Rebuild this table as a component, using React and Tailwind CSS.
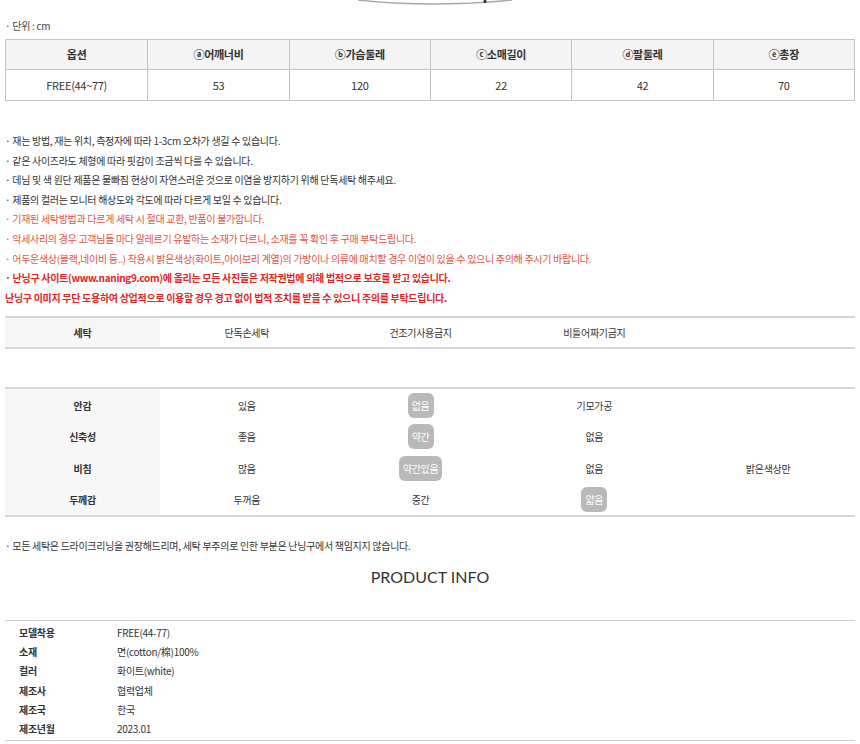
const KR = { fontFamily: '"Noto Sans CJK KR", "Noto Sans", sans-serif' };

const sizeHead = ['옵션', 'ⓐ어깨너비', 'ⓑ가슴둘레', 'ⓒ소매길이', 'ⓓ팔둘레', 'ⓔ총장'];
const sizeBody = ['FREE(44~77)', '53', '120', '22', '42', '70'];

const notes = [
  { t: '· 재는 방법, 재는 위치, 측정자에 따라 1-3cm 오차가 생길 수 있습니다.', c: 'text-[#333]' },
  { t: '· 같은 사이즈라도 체형에 따라 핏감이 조금씩 다를 수 있습니다.', c: 'text-[#333]' },
  { t: '· 데님 및 색 원단 제품은 물빠짐 현상이 자연스러운 것으로 이염을 방지하기 위해 단독세탁 해주세요.', c: 'text-[#333]' },
  { t: '· 제품의 컬러는 모니터 해상도와 각도에 따라 다르게 보일 수 있습니다.', c: 'text-[#333]' },
  { t: '· 기재된 세탁방법과 다르게 세탁 시 절대 교환, 반품이 불가합니다.', c: 'text-[#e2533f]' },
  { t: '· 악세사리의 경우 고객님들 마다 알레르기 유발하는 소재가 다르니, 소재를 꼭 확인 후 구매 부탁드립니다.', c: 'text-[#e2533f]' },
  { t: '· 어두운색상(블랙,네이비 등..) 착용시 밝은색상(화이트,아이보리 계열)의 가방이나 의류에 매치할 경우 이염이 있을 수 있으니 주의해 주시기 바랍니다.', c: 'text-[#e2533f]' },
  { t: '· 난닝구 사이트(www.naning9.com)에 올리는 모든 사진들은 저작권법에 의해 법적으로 보호를 받고 있습니다.', c: 'text-[#e0241f] font-bold' },
  { t: '난닝구 이미지 무단 도용하여 상업적으로 이용할 경우 경고 없이 법적 조치를 받을 수 있으니 주의를 부탁드립니다.', c: 'text-[#e0241f] font-bold' },
];

// which column is highlighted per row (index into values)
const fabric = [
  { label: '안감', vals: ['있음', '없음', '기모가공', ''], on: 1 },
  { label: '신축성', vals: ['좋음', '약간', '없음', ''], on: 1 },
  { label: '비침', vals: ['많음', '약간있음', '없음', '밝은색상만'], on: 1 },
  { label: '두께감', vals: ['두꺼움', '중간', '얇음', ''], on: 2 },
];

const info = [
  ['모델착용', 'FREE(44-77)'],
  ['소재', '면(cotton/棉)100%'],
  ['컬러', '화이트(white)'],
  ['제조사', '협력업체'],
  ['제조국', '한국'],
  ['제조년월', '2023.01'],
];

function Cell({ children, on }) {
  if (!children) return <div />;
  return (
    <div className="flex items-center justify-center">
      {on ? (
        <span className="bg-[#b9b9b9] text-white rounded-[6px] h-[25px] px-[4px] flex items-center">{children}</span>
      ) : (
        <span>{children}</span>
      )}
    </div>
  );
}

export default function App() {
  return (
    <div className="w-[860px] bg-white text-[10px] text-[#333] tracking-[-0.3px]" style={KR}>
      {/* garment drawing edge */}
      <div className="h-[8px]">
        <svg width="860" height="8" viewBox="0 0 860 8">
          <path d="M358 0 Q430 8 512 0" fill="none" stroke="#a8a8a8" strokeWidth="1.4" />
          <circle cx="485" cy="1.5" r="1.6" fill="#333" />
        </svg>
      </div>

      <div className="px-[5px]">
        <p className="mt-[10px] leading-[16px] text-[#444]">· 단위 : cm</p>

        {/* size table */}
        <div className="mt-[5px] border border-[#c4c4c4] grid grid-cols-6">
          {sizeHead.map((h, i) => (
            <div key={h} className={`h-[30px] flex items-center justify-center bg-[#f4f4f4] font-bold text-[11px] border-b border-[#c4c4c4] ${i > 0 ? 'border-l' : ''}`}>
              {h}
            </div>
          ))}
          {sizeBody.map((v, i) => (
            <div key={i} className={`h-[30px] flex items-center justify-center text-[11px] border-[#c4c4c4] ${i > 0 ? 'border-l' : ''}`}>
              {v}
            </div>
          ))}
        </div>

        {/* notes */}
        <div className="mt-[30px]">
          {notes.map((n, i) => (
            <p key={i} className={`leading-[19.6px] whitespace-nowrap ${n.c}`}>{n.t}</p>
          ))}
        </div>

        {/* wash */}
        <div className="mt-[9px] border-t-2 border-b-2 border-[#d6d6d6] grid grid-cols-[155px_1fr_1fr_1fr_1fr] h-[33px]">
          <div className="bg-[#f7f7f7] flex items-center justify-center font-bold">세탁</div>
          <Cell>단독손세탁</Cell>
          <Cell>건조기사용금지</Cell>
          <Cell>비틀어짜기금지</Cell>
          <div />
        </div>
        <div className="h-[40px] border-b-2 border-[#d6d6d6]" />

        {/* fabric */}
        <div className="border-b-2 border-[#d6d6d6]">
          {fabric.map((r) => (
            <div key={r.label} className="grid grid-cols-[155px_1fr_1fr_1fr_1fr] h-[31.5px]">
              <div className="bg-[#f7f7f7] flex items-center justify-center font-bold">{r.label}</div>
              {r.vals.map((v, i) => (
                <Cell key={i} on={i === r.on}>{v}</Cell>
              ))}
            </div>
          ))}
        </div>

        <p className="mt-[21px] leading-[16px]">· 모든 세탁은 드라이크리닝을 권장해드리며, 세탁 부주의로 인한 부분은 난닝구에서 책임지지 않습니다.</p>

        <h2 className="mt-[11px] leading-[24px] text-center text-[16px] text-[#333] tracking-normal" style={{ fontFamily: 'Lato, "Open Sans", sans-serif' }}>
          PRODUCT INFO
        </h2>

        {/* product info */}
        <div className="mt-[31px] border-t border-b border-[#cfcfcf] py-[1px]">
          {info.map(([k, v]) => (
            <div key={k} className="flex h-[19.4px] items-center">
              <span className="w-[112px] pl-[14px] font-bold">{k}</span>
              <span>{v}</span>
            </div>
          ))}
        </div>
      </div>
    </div>
  );
}
